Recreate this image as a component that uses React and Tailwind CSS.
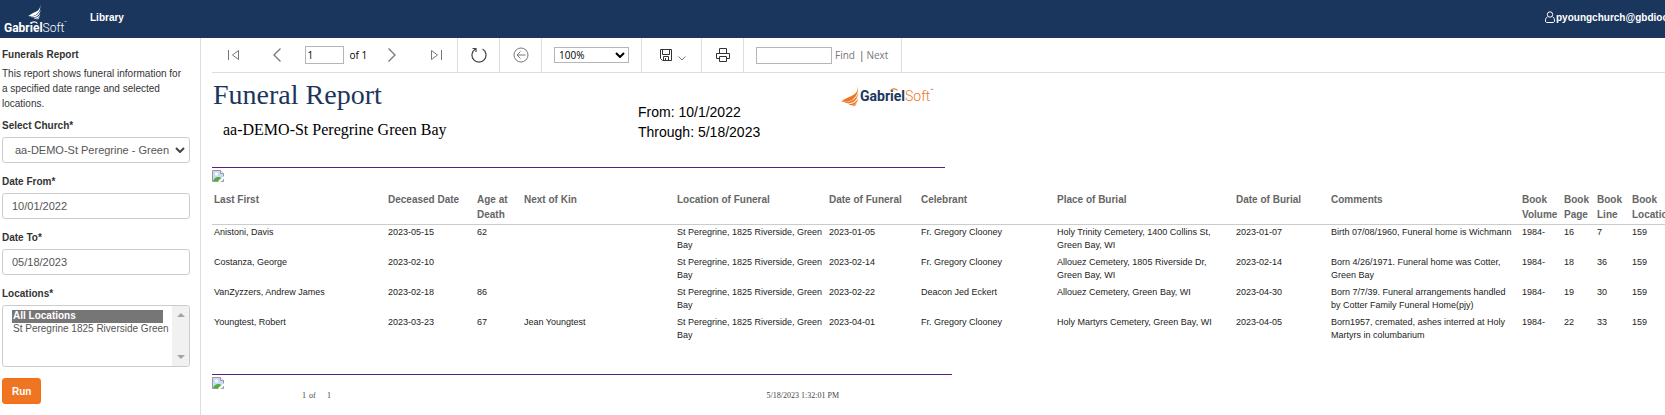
import { useState } from 'react';

const COLUMNS = [
  { label: 'Last First', width: 'w-[174px]' },
  { label: 'Deceased Date', width: 'w-[89px]' },
  { label: 'Age at Death', width: 'w-[47px]' },
  { label: 'Next of Kin', width: 'w-[153px]' },
  { label: 'Location of Funeral', width: 'w-[152px]' },
  { label: 'Date of Funeral', width: 'w-[92px]' },
  { label: 'Celebrant', width: 'w-[136px]' },
  { label: 'Place of Burial', width: 'w-[179px]' },
  { label: 'Date of Burial', width: 'w-[95px]' },
  { label: 'Comments', width: 'w-[191px]', pad: 'pr-2' },
  { label: 'Book Volume', width: 'w-[42px]' },
  { label: 'Book Page', width: 'w-[33px]' },
  { label: 'Book Line', width: 'w-[35px]' },
  { label: 'Book Location', width: 'w-[60px]' },
];

const LOCATION = 'St Peregrine, 1825 Riverside, Green Bay';

const ROWS = [
  ['Anistoni, Davis', '2023-05-15', '62', '', LOCATION, '2023-01-05', 'Fr. Gregory Clooney', 'Holy Trinity Cemetery, 1400 Collins St, Green Bay, WI', '2023-01-07', 'Birth 07/08/1960, Funeral home is Wichmann', '1984-', '16', '7', '159'],
  ['Costanza, George', '2023-02-10', '', '', LOCATION, '2023-02-14', 'Fr. Gregory Clooney', 'Allouez Cemetery, 1805 Riverside Dr, Green Bay, WI', '2023-02-14', 'Born 4/26/1971. Funeral home was Cotter, Green Bay', '1984-', '18', '36', '159'],
  ['VanZyzzers, Andrew James', '2023-02-18', '86', '', LOCATION, '2023-02-22', 'Deacon Jed Eckert', 'Allouez Cemetery, Green Bay, WI', '2023-04-30', 'Born 7/7/39. Funeral arrangements handled by Cotter Family Funeral Home(pjy)', '1984-', '19', '30', '159'],
  ['Youngtest, Robert', '2023-03-23', '67', 'Jean Youngtest', LOCATION, '2023-04-01', 'Fr. Gregory Clooney', 'Holy Martyrs Cemetery, Green Bay, WI', '2023-04-05', 'Born1957, cremated, ashes interred at Holy Martyrs in columbarium', '1984-', '22', '33', '159'],
];

function Wing({ className }) {
  return (
    <svg viewBox="0 0 18 22" className={className} fill="currentColor" aria-hidden="true">
      <path d="M16.600 0c.8 4-.3 7-3.200 9.200C10.500 11.300 5.500 12.500.400 16.400c3.800.9 8.200.3 11.300-2C16 11.200 18 6 16.600 0z" />
      <path d="M17.200 7.600c-.8 4.400-4 7.600-8.400 8.900-1.700.5-3.500.7-5.300.7 1 .8 2.500 1.200 4.200 1.200 5.200-.1 9.600-4.500 9.500-10.800z" />
      <path d="M17 13.400c-1.600 3.400-4.800 5.400-9.300 5.800.8.800 2 1.200 3.200 1.100 3.200-.3 5.700-3 6.100-6.900z" />
      <path d="M15.800 18c-1.200 1.500-2.600 2.400-4.500 2.900 2 .9 4-.4 4.500-2.900z" />
    </svg>
  );
}

function Halo({ className }) {
  return (
    <svg viewBox="0 0 8 3" className={className} fill="none" stroke="currentColor" aria-hidden="true">
      <path d="M.5 2.500C2 .3 6 .3 7.500 2.500" strokeWidth="1.200" />
    </svg>
  );
}

function BrokenImage() {
  return (
    <svg viewBox="0 0 12 12" className="block size-3" aria-hidden="true">
      <path d="M.5.500h8l3 3v8H.500z" fill="#c9dbf7" stroke="#9b9b9b" />
      <path d="M8.500.500v3h3" fill="#fff" stroke="#9b9b9b" />
      <circle cx="4.500" cy="4" r="1.500" fill="#fff" />
      <path d="M1 11c1-2.500 3-4 5.500-4 1 0 2 .3 2.500 1l-3 3z" fill="#4fae36" />
      <path d="M6 12l6-6v2.500L8.500 12z" fill="#fff" />
    </svg>
  );
}

function Icon({ children, className = 'size-4 text-[#777]' }) {
  return (
    <svg viewBox="0 0 16 16" className={className} fill="none" stroke="currentColor" aria-hidden="true">
      {children}
    </svg>
  );
}

function ToolButton({ label, children, className = 'w-[42px]' }) {
  return (
    <button type="button" aria-label={label} className={`flex h-full items-center justify-center ${className}`}>
      {children}
    </button>
  );
}

function TopBar() {
  return (
    <header className="flex h-[38px] items-center justify-between overflow-hidden bg-[#1b365d] text-[10px] font-bold text-white">
      <div className="flex items-center">
        <a href="#home" aria-label="GabrielSoft" className="flex w-[90px] flex-col pl-1">
          <Wing className="ml-6 h-4 w-[13px]" />
          <span className="relative mt-px font-['Roboto',sans-serif] text-[12px] leading-[14px]">
            Gabriel<span className="font-light">Soft</span>
            <span className="align-top text-[4px] leading-none font-normal">™</span>
            <Halo className="absolute top-0 left-[26px] h-[3px] w-2" />
          </span>
        </a>
        <a href="#library" className="-mt-1 leading-[15px]">Library</a>
      </div>
      <a href="#account" className="-mt-1 flex w-[120px] shrink-0 items-center gap-px leading-[15px] whitespace-nowrap">
        <svg viewBox="0 0 10 12" className="h-3 w-[10px] shrink-0" fill="none" stroke="currentColor" aria-hidden="true">
          <circle cx="5" cy="3.500" r="2.700" />
          <path d="M2.500 5.800C.7 6.600.500 8.300.5 10c0 .9.600 1.500 1.500 1.500h6c.9 0 1.500-.6 1.500-1.500 0-1.700-.2-3.400-2-4.200" />
        </svg>
        pyoungchurch@gbdioc
      </a>
    </header>
  );
}

function Field({ id, label, children }) {
  return (
    <div className="mb-[11px]">
      <label htmlFor={id} className="mb-1 block leading-[15px] font-bold text-[#333]">{label}</label>
      {children}
    </div>
  );
}

function Sidebar() {
  const [from, setFrom] = useState('10/01/2022');
  const [to, setTo] = useState('05/18/2023');
  const control = 'block h-[26px] w-full rounded-[3px] border border-[#ccc] bg-white text-[11px] text-[#555]';

  return (
    <aside className="w-[201px] shrink-0 border-r border-[#ddd] pt-[9px] pr-[10px] pl-[2px] text-[10px] text-[#333]">
      <h2 className="leading-[15px] font-bold">Funerals Report</h2>
      <p className="mt-1 mb-[7px] pr-2 leading-[15px]">
        This report shows funeral information for a specified date range and selected locations.
      </p>
      <Field id="church" label="Select Church*">
        <div className="relative">
          <select id="church" className={`${control} appearance-none pl-3`}>
            <option>aa-DEMO-St Peregrine - Green</option>
          </select>
          <svg viewBox="0 0 10 6" className="pointer-events-none absolute top-[10px] right-[5px] h-[6px] w-[10px]" fill="none" stroke="#444" strokeWidth="2" aria-hidden="true">
            <path d="M1 1l4 4 4-4" />
          </svg>
        </div>
      </Field>
      <Field id="from" label="Date From*">
        <input id="from" value={from} onChange={(e) => setFrom(e.target.value)} className={`${control} px-[9px]`} />
      </Field>
      <Field id="to" label="Date To*">
        <input id="to" value={to} onChange={(e) => setTo(e.target.value)} className={`${control} px-[9px]`} />
      </Field>
      <Field id="locations" label="Locations*">
        <div className="flex h-[62px] overflow-hidden rounded-[3px] border border-[#ccc]">
          <select id="locations" multiple defaultValue={['all']} className="min-w-0 flex-1 overflow-hidden py-1 pl-[9px] text-[10px] text-[#555]">
            <option value="all" className="mr-[9px] h-[13px] bg-[#767676] p-0 pl-px leading-[13px] font-bold text-white">All Locations</option>
            <option value="st" className="h-[13px] p-0 pl-px leading-[13px]">St Peregrine 1825 Riverside Green</option>
          </select>
          <div className="flex w-[17px] flex-col items-center justify-between bg-[#f1f1f1] py-[7px]">
            <svg viewBox="0 0 8 4" className="h-1 w-2" fill="#a3a3a3" aria-hidden="true"><path d="M0 4l4-4 4 4z" /></svg>
            <svg viewBox="0 0 8 4" className="h-1 w-2" fill="#a3a3a3" aria-hidden="true"><path d="M0 0l4 4 4-4z" /></svg>
          </div>
        </div>
      </Field>
      <button type="button" className="h-[26px] rounded-[3px] border border-[#fd6d0d] bg-[#ee7623] px-[9px] text-[10px] font-bold text-white">
        Run
      </button>
    </aside>
  );
}

function Toolbar() {
  const [page, setPage] = useState('1');
  const [query, setQuery] = useState('');

  return (
    <div className="flex h-[35px] border-b border-[#ddd] font-['Open_Sans',sans-serif] text-[10px] text-black">
      <div className="flex w-[246px] items-center border-r border-[#ddd]">
        <ToolButton label="First page">
          <Icon><path d="M3.500 3v10M13.500 3.500v9L7.500 8z" /></Icon>
        </ToolButton>
        <ToolButton label="Previous page" className="w-[46px]">
          <Icon><path d="M11.500 1.500L5 8l6.500 6.500" strokeWidth="1.300" /></Icon>
        </ToolButton>
        <input aria-label="Page" value={page} onChange={(e) => setPage(e.target.value)} className="ml-[5px] h-[18px] w-[39px] border border-[#b5b5b5] px-[2px]" />
        <span className="w-[26px] pl-[6px] whitespace-nowrap">of 1</span>
        <ToolButton label="Next page" className="w-[46px]">
          <Icon><path d="M4.500 1.500L11 8l-6.500 6.500" strokeWidth="1.300" /></Icon>
        </ToolButton>
        <ToolButton label="Last page">
          <Icon><path d="M13.500 3v10M3.500 3.500v9L9.500 8z" /></Icon>
        </ToolButton>
      </div>
      <div className="border-r border-[#ddd]">
        <ToolButton label="Refresh" className="w-[41px]">
          <Icon className="size-4 text-[#444]"><path d="M11.500 2A7 7 0 1 1 4.500 2M1.500 1.500h3.500v3.500" strokeWidth="1.200" /></Icon>
        </ToolButton>
      </div>
      <div className="border-r border-[#ddd]">
        <ToolButton label="Back to parent report" className="w-[41px]">
          <Icon><circle cx="8" cy="8" r="7" /><path d="M12.500 8H4M7.500 4.500L4 8l3.500 3.500" /></Icon>
        </ToolButton>
      </div>
      <div className="relative flex w-[100px] items-center border-r border-[#ddd] pl-3">
        <select aria-label="Zoom" className="h-4 w-[75px] appearance-none border border-[#b5b5b5] bg-white pl-1 leading-[14px]">
          <option>100%</option>
        </select>
        <svg viewBox="0 0 10 6" className="pointer-events-none absolute right-4 h-[6px] w-[10px]" fill="none" stroke="#000" strokeWidth="2" aria-hidden="true">
          <path d="M1 1l4 4 4-4" />
        </svg>
      </div>
      <div className="border-r border-[#ddd]">
        <ToolButton label="Export" className="w-[59px] gap-1">
          <Icon className="size-4 text-[#333]">
            <path d="M2.500 2.500h11v11h-9l-2-2zM4.500 2.500v5h7v-5M5.500 13.500v-4h5v4M7.500 11v2.500" />
          </Icon>
          <svg viewBox="0 0 8 5" className="mt-[6px] h-[5px] w-2" fill="none" stroke="#777" aria-hidden="true"><path d="M.5.500L4 4 7.500.500" /></svg>
        </ToolButton>
      </div>
      <div className="border-r border-[#ddd]">
        <ToolButton label="Print" className="w-[41px]">
          <Icon className="size-4 text-[#333]">
            <path d="M4.500 6.500v-5h7v5M4.500 11.500h-3v-5h13v5h-3M4.500 9.500h7v5h-7z" />
          </Icon>
        </ToolButton>
      </div>
      <div className="flex w-[158px] items-center border-r border-[#ddd] pl-3 text-[#777]">
        <input aria-label="Find text" value={query} onChange={(e) => setQuery(e.target.value)} className="h-[17px] w-[76px] border border-[#b5b5b5] px-1" />
        <button type="button" className="ml-[3px]">Find</button>
        <span className="mr-[2px] ml-1 text-[#444]">|</span>
        <button type="button">Next</button>
      </div>
    </div>
  );
}

function ReportHeader() {
  return (
    <div className="flex h-[94px] items-start">
      <div className="w-[426px] pl-px font-['Liberation_Serif',serif]">
        <h1 className="pt-[6px] text-[28px] leading-8 text-[#1b365d]">Funeral Report</h1>
        <p className="pt-[9px] pl-[10px] text-[16px] leading-5 text-black">aa-DEMO-St Peregrine Green Bay</p>
      </div>
      <div className="w-[203px] pt-[29px] text-[14px] leading-5 text-black">
        <p>From: 10/1/2022</p>
        <p>Through: 5/18/2023</p>
      </div>
      <div className="flex items-start pt-3 text-[#ee7623]">
        <Wing className="h-[22px] w-[18px]" />
        <span className="relative ml-px pt-[3px] font-['Roboto',sans-serif] text-[14px] leading-[16px] font-bold whitespace-nowrap text-[#1b365d]">
          Gabriel<span className="font-light text-[#ee7623]">Soft</span>
          <span className="align-top text-[5px] leading-none font-normal">™</span>
          <Halo className="absolute top-[3px] left-[30px] h-[3px] w-2 text-[#ee7623]" />
        </span>
      </div>
    </div>
  );
}

function ReportTable() {
  return (
    <table className="mt-[6px] w-[1478px] table-fixed border-collapse text-left text-[9px] leading-[13px] text-[#222]">
      <thead>
        <tr className="border-b border-[#ccc] text-[10px] leading-[15px] text-[#666]">
          {COLUMNS.map((c) => (
            <th key={c.label} scope="col" className={`${c.width} px-[2px] pt-1 pb-[2px] align-top font-bold`}>{c.label}</th>
          ))}
        </tr>
      </thead>
      <tbody>
        {ROWS.map((row) => (
          <tr key={row[0]} className="h-[30px]">
            {row.map((cell, i) => (
              <td key={COLUMNS[i].label} className={`pt-px pb-[3px] pl-[2px] align-top ${COLUMNS[i].pad || 'pr-[2px]'}`}>{cell}</td>
            ))}
          </tr>
        ))}
      </tbody>
    </table>
  );
}

export default function App() {
  return (
    <div className="flex min-h-screen flex-col bg-white font-['Liberation_Sans',Arial,sans-serif]">
      <TopBar />
      <div className="flex flex-1">
        <Sidebar />
        <main className="min-w-0 flex-1 overflow-hidden pl-[11px]">
          <Toolbar />
          <ReportHeader />
          <div className="w-[733px] border-t border-[#5b1f80] pt-[2px]">
            <BrokenImage />
          </div>
          <ReportTable />
          <footer className="mt-[29px] w-[740px] border-t border-[#5b1f80] pt-[2px] font-['Liberation_Serif',serif] text-[8px] leading-[10px] text-[#444]">
            <BrokenImage />
            <div className="flex pt-[2px] pl-[90px]">
              <span className="w-[7px]">1</span>
              <span className="w-[18px]">of</span>
              <span>1</span>
              <span className="ml-auto pr-[113px]">5/18/2023 1:32:01 PM</span>
            </div>
          </footer>
        </main>
      </div>
    </div>
  );
}
